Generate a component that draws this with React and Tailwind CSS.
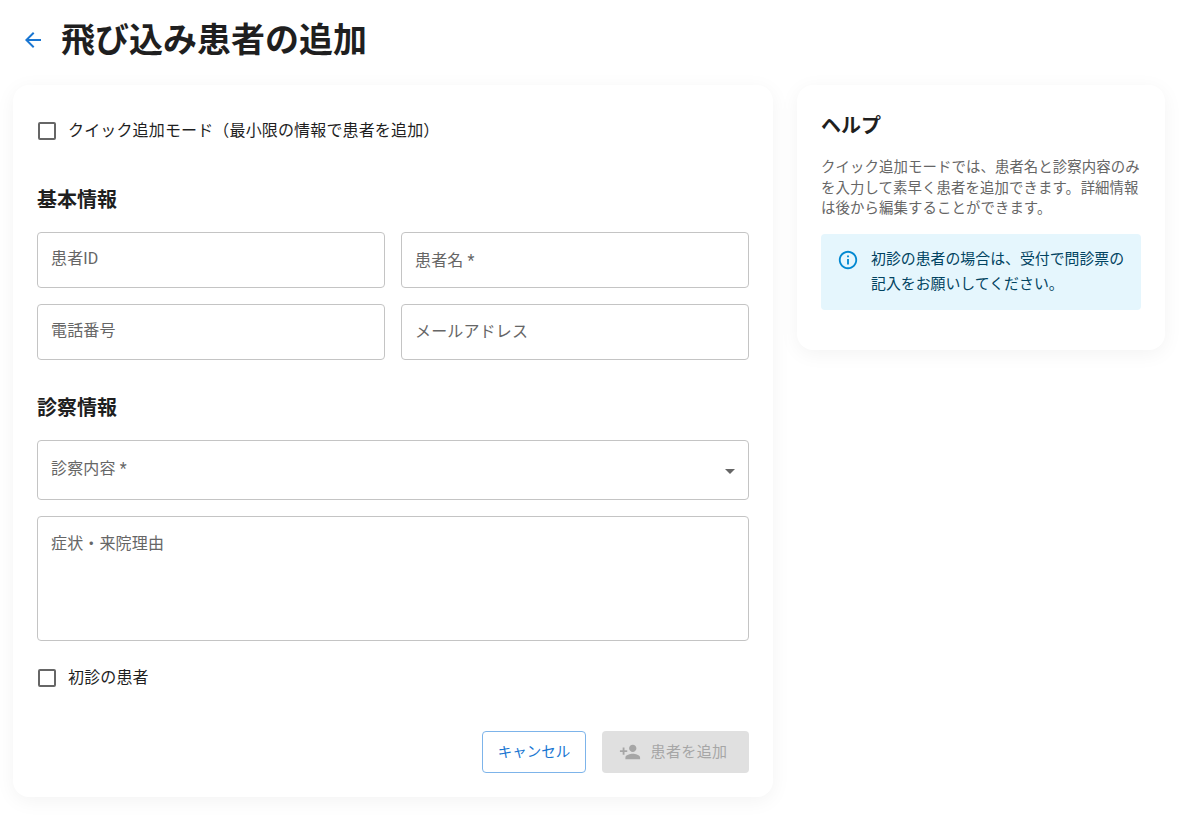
const Field = ({ placeholder, className = '' }) => (
  <input
    placeholder={placeholder}
    className={`h-14 w-full rounded border border-[#c4c4c4] bg-white px-[13px] text-base tracking-[0.15px] text-[#666] outline-none placeholder:text-[#666] ${className}`}
  />
);

const CheckRow = ({ label, className = '' }) => (
  <label className={`flex items-center gap-[12px] pl-px text-base leading-6 tracking-[0.15px] text-[#1f1f1f] ${className}`}>
    <span className="h-[18px] w-[18px] rounded-[2px] border-2 border-[#666] bg-white" />
    {label}
  </label>
);

const App = () => {
  return (
    <div
      className="min-h-[820px] bg-white px-[13px] pt-5 text-[#1f1f1f]"
      style={{ fontFamily: 'Roboto, "Noto Sans CJK JP", sans-serif' }}
    >
      <div className="flex h-10 items-center pl-[8px]">
        <svg viewBox="0 0 24 24" className="h-6 w-6 fill-[#1976d2]">
          <path d="M20 11H7.83l5.59-5.59L12 4l-8 8 8 8 1.41-1.41L7.83 13H20v-2z" />
        </svg>
        <h1 className="ml-[16px] text-[34px] font-bold leading-10">飛び込み患者の追加</h1>
      </div>

      <div className="mt-[25px] flex items-start gap-6">
        <div className="w-[760px] rounded-2xl bg-white p-6 shadow-[0_4px_20px_rgba(0,0,0,0.05)]">
          <CheckRow label="クイック追加モード（最小限の情報で患者を追加）" className="mt-[10px]" />

          <h2 className="mt-[43px] text-xl font-bold leading-7">基本情報</h2>
          <div className="mt-[18px] grid grid-cols-2 gap-4">
            <Field placeholder="患者ID" className="pb-1" />
            <Field placeholder="患者名 *" />
            <Field placeholder="電話番号" className="pb-1" />
            <Field placeholder="メールアドレス" className="pb-[2px]" />
          </div>

          <h2 className="mt-[34px] text-xl font-bold leading-7">診察情報</h2>
          <div className="mt-[18px] flex h-[60px] items-center justify-between rounded border border-[#c4c4c4] px-[13px] pb-[2px] text-base tracking-[0.15px] text-[#666]">
            <span>診察内容 *</span>
            <svg viewBox="0 0 10 5" className="mt-1 h-[5px] w-[10px] fill-[#666]">
              <path d="M0 0l5 5 5-5z" />
            </svg>
          </div>
          <textarea
            placeholder="症状・来院理由"
            className="mt-4 block h-[125px] w-full resize-none rounded border border-[#c4c4c4] px-[13px] py-[15px] text-base leading-6 tracking-[0.15px] outline-none placeholder:text-[#666]"
          />
          <CheckRow label="初診の患者" className="mt-[25px]" />

          <div className="mt-[41px] flex justify-end gap-4">
            <button className="h-[42px] w-[104px] rounded border border-[#7db4ea] bg-white pt-[2px] text-[14.5px] text-[#1976d2]">
              キャンセル
            </button>
            <button disabled className="flex h-[42px] w-[147px] items-center justify-center gap-[9px] rounded bg-[#e0e0e0] pr-1 text-[15px] tracking-[0.4px] text-[#a6a6a6]">
              <svg viewBox="0 0 24 24" className="h-[22px] w-[22px] fill-[#a6a6a6]">
                <path d="M15 12c2.21 0 4-1.79 4-4s-1.79-4-4-4-4 1.79-4 4 1.79 4 4 4zm-9-2V7H4v3H1v2h3v3h2v-3h3v-2H6zm9 4c-2.67 0-8 1.34-8 4v2h16v-2c0-2.66-5.33-4-8-4z" />
              </svg>
              患者を追加
            </button>
          </div>
        </div>

        <div className="w-[368px] rounded-2xl bg-white px-6 pb-10 pt-[27px] shadow-[0_4px_20px_rgba(0,0,0,0.05)]">
          <h2 className="text-xl font-bold leading-7">ヘルプ</h2>
          <p className="mt-[18px] text-[14.4px] leading-[20.6px] tracking-[0.1px] text-[#666] [word-spacing:-3px]">
            クイック追加モードでは、患者名と診察内容のみを入力して素早く患者を追加できます。 詳細情報は後から編集することができます。
          </p>
          <div className="mt-[14px] flex rounded bg-[#e5f6fd] px-4 py-[13px] text-[14.9px] leading-[25px] text-[#014361]">
            <svg viewBox="0 0 24 24" className="mr-[12px] mt-[2px] h-[22px] w-[22px] shrink-0 fill-[#0288d1]">
              <path d="M11 7h2v2h-2zm0 4h2v6h-2zm1-9C6.48 2 2 6.48 2 12s4.48 10 10 10 10-4.48 10-10S17.52 2 12 2zm0 18c-4.41 0-8-3.59-8-8s3.59-8 8-8 8 3.59 8 8-3.59 8-8 8z" />
            </svg>
            <p>初診の患者の場合は、受付で問診票の記入をお願いしてください。</p>
          </div>
        </div>
      </div>
    </div>
  );
};

export default App;
